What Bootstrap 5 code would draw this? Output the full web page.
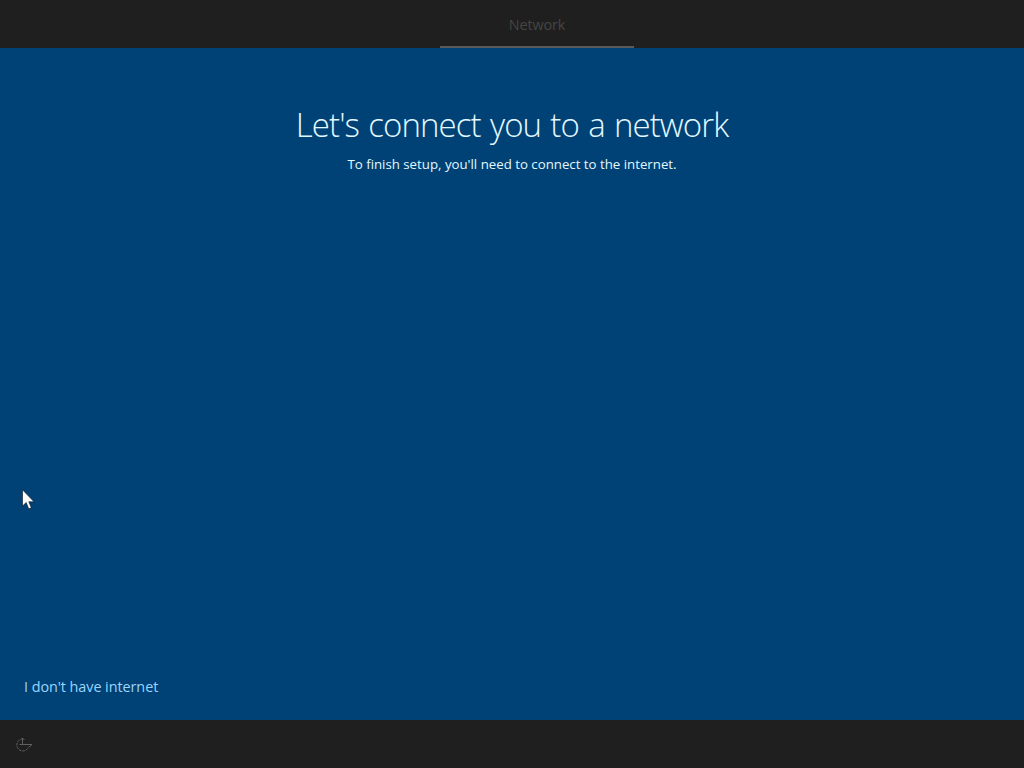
<!DOCTYPE html>
<html lang="en">
<head>
  <meta charset="UTF-8">
  <title>Let's connect you to a network</title>
  <meta name="viewport" content="width=device-width, initial-scale=1">
  <link href="https://cdn.jsdelivr.net/npm/bootstrap@5.3.0/dist/css/bootstrap.min.css" rel="stylesheet">
  <style>
    body {
      background-color: #004275;
      font-family: "Open Sans", "Noto Sans", sans-serif;
      color: #fff;
      overflow: hidden;
    }

    .setup-bar {
      height: 48px;
      background-color: #1f1f1f;
    }

    .setup-tabs {
      padding-left: 50px;
    }

    .setup-tabs .nav-link {
      width: 194px;
      height: 48px;
      padding: 0;
      line-height: 49px;
      font-size: 14.4px;
      letter-spacing: -0.1px;
      text-align: center;
      color: #454545;
      border-bottom: 2px solid #5a5a5a;
    }

    .page-title {
      margin: 54px 0 0;
      font-size: 33px;
      font-weight: 300;
      line-height: 46px;
      letter-spacing: -0.9px;
      word-spacing: 1.5px;
      color: #e2f8ff;
    }

    .page-note {
      margin: 5px 0 0;
      font-size: 13.25px;
      line-height: 22px;
      color: #e2f8ff;
    }

    .skip-link {
      font-size: 14.4px;
      line-height: 20px;
      letter-spacing: -0.06px;
      padding: 0 0 23px 24px;
      color: #99d5ff;
    }

    .access-btn {
      width: 18px;
      height: 16px;
      margin-left: 15px;
      margin-top: 2px;
    }

    .pointer {
      left: 22px;
      top: 489px;
    }
  </style>
</head>
<body class="vh-100 d-flex flex-column">
  <!-- Step tabs -->
  <header class="setup-bar">
    <nav class="nav setup-tabs justify-content-center">
      <a class="nav-link" href="#">Network</a>
    </nav>
  </header>

  <!-- Content -->
  <main class="flex-grow-1 d-flex flex-column">
    <div class="text-center">
      <h1 class="page-title">Let's connect you to a network</h1>
      <p class="page-note">To finish setup, you'll need to connect to the internet.</p>
    </div>
    <a class="skip-link text-decoration-none mt-auto me-auto" href="#">I don't have internet</a>
  </main>

  <!-- Bottom bar -->
  <footer class="setup-bar d-flex align-items-center">
    <button class="access-btn btn border-0 p-0 d-flex" type="button" aria-label="Ease of Access">
      <svg width="18" height="16" viewBox="0 0 18 16" fill="none" stroke="#666">
        <path d="M7.500 1V7.500M5.500 3L7.500 1L9.500 3M4.500 7.500H17L13.500 10.500" stroke-width=".9"/>
        <path d="M4.500 3A6 6 0 1 0 13.300 10.500" stroke-dasharray="2.600 1"/>
      </svg>
    </button>
  </footer>

  <!-- Mouse pointer -->
  <svg class="pointer position-absolute" width="13" height="21" viewBox="0 0 13 21">
    <path d="M.5 .8V17L4.200 13.500L6.700 19.800L9.300 18.700L6.800 12.800H12Z" fill="#fff" stroke="#0a1420" stroke-width=".6"/>
  </svg>

  <script src="https://cdn.jsdelivr.net/npm/bootstrap@5.3.0/dist/js/bootstrap.bundle.min.js"></script>
</body>
</html>
